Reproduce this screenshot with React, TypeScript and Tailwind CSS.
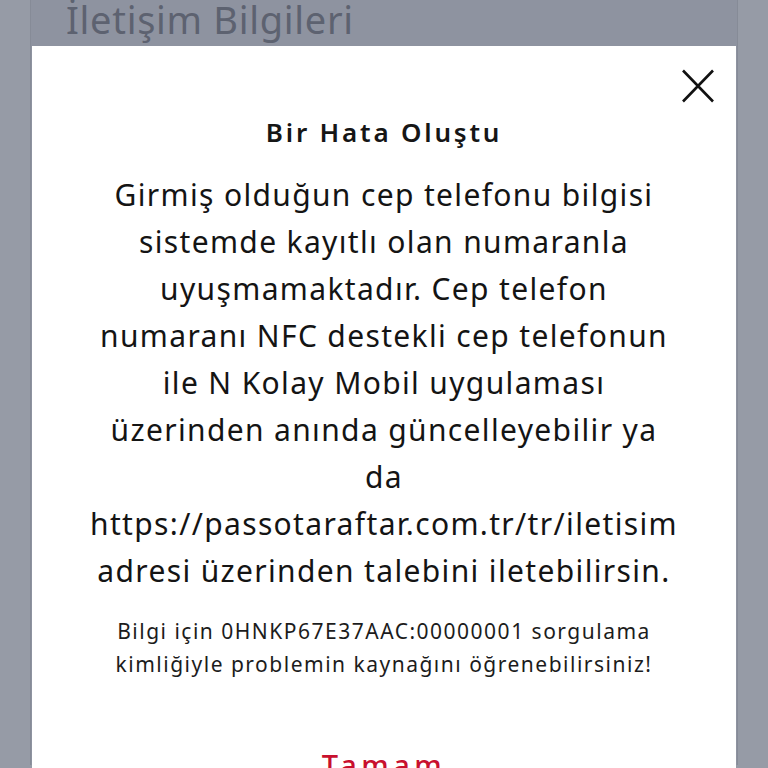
import React from 'react';

const bodyLines = [
  'Girmiş olduğun cep telefonu bilgisi',
  'sistemde kayıtlı olan numaranla',
  'uyuşmamaktadır. Cep telefon',
  'numaranı NFC destekli cep telefonun',
  'ile N Kolay Mobil uygulaması',
  'üzerinden anında güncelleyebilir ya',
  'da',
  'https://passotaraftar.com.tr/tr/iletisim',
  'adresi üzerinden talebini iletebilirsin.',
];

const App: React.FC = () => {
  return (
    <div
      className="relative w-[768px] h-[768px] overflow-hidden bg-[#969ba6]"
      style={{ fontFamily: '"Noto Sans", "DejaVu Sans", sans-serif' }}
    >
      {/* page behind the dialog */}
      <div className="mx-[30px] h-full bg-[#8e93a0] border-x border-[#868b97]">
        <h2 className="pl-[35px] -mt-[3px] text-[38px] leading-[44px] tracking-[0.7px] text-[#5d6270]">
          İletişim Bilgileri
        </h2>
      </div>

      {/* dialog */}
      <div className="absolute left-[32px] top-[46px] w-[704px] h-[760px] bg-white">
        <button className="absolute left-[649px] top-[23px] w-[34px] h-[34px] flex items-center justify-center">
          <svg width="34" height="34" viewBox="0 0 34 34" fill="none">
            <path d="M2 1.5L32 32.5M32 1.5L2 32.5" stroke="#111" strokeWidth="2.6" />
          </svg>
        </button>

        <div className="flex flex-col items-center pt-[70px] text-center">
          <h3 className="text-[26px] leading-[32px] font-semibold tracking-[2.8px] text-[#161616]">
            Bir Hata Oluştu
          </h3>
          <p className="mt-[23px] text-[30px] leading-[47px] tracking-[1.35px] text-[#141414]">
            {bodyLines.map((l, i) => (
              <React.Fragment key={i}>
                {l}
                {i < bodyLines.length - 1 && <br />}
              </React.Fragment>
            ))}
          </p>
          <p className="mt-[21px] text-[21px] leading-[33px] tracking-[1.5px] text-[#1c1c1c]">
            Bilgi için 0HNKP67E37AAC:00000001 sorgulama
            <br />
            kimliğiyle problemin kaynağını öğrenebilirsiniz!
          </p>
          <button className="mt-[64px] text-[29px] leading-[40px] font-medium tracking-[4.5px] text-[#c8102e]">
            Tamam
          </button>
        </div>
      </div>
    </div>
  );
};

export default App;
